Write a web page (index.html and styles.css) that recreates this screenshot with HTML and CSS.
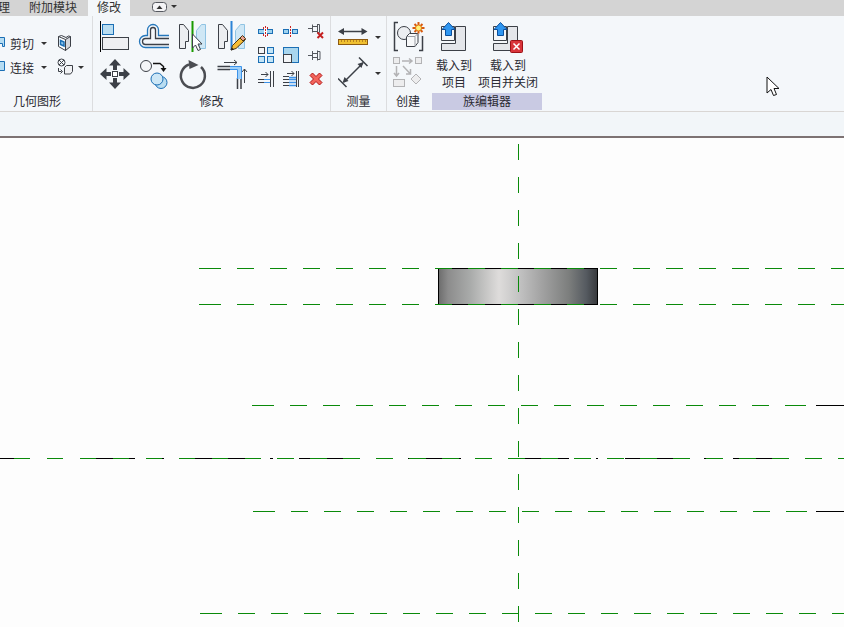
FILE: index.html
```html
<!DOCTYPE html>
<html lang="zh-CN">
<head>
    <meta charset="UTF-8">
    <meta name="viewport" content="width=device-width, initial-scale=1.0">
    <title>族编辑器</title>
    <link rel="stylesheet" href="styles.css">
</head>

<body>
    <nav class="tabs">
        <a href="#manage" class="tab">理</a>
        <a href="#addins" class="tab">附加模块</a>
        <a href="#modify" class="tab active">修改</a>
        <button class="collapse" aria-label="最小化功能区">
            <svg width="16" height="12"><rect x=".5" y="1.500" width="14" height="9" rx="3" fill="#f4f4f6" stroke="#55585f"/><path d="M4.500 8l3-3.500 3 3.500z" fill="#333"/></svg>
            <span class="caret"></span>
        </button>
    </nav>

    <div class="ribbon">
        <!-- 几何图形 -->
        <section class="group geometry">
            <div class="tools">
                <div class="row">
                    <button class="text-btn">
                        <svg width="5" height="16"><path d="M-1 2.500h5.500v9H2.500V8.500H-1z" fill="#b5dcf2" stroke="#1b6fb5"/></svg>
                        剪切 <span class="caret"></span>
                    </button>
                    <button aria-label="拆分面">
                        <svg width="16" height="18" fill="none" stroke="#3c4047"><path d="M1.500 2.500l7 3V16.500l-7-4z" fill="#fff"/><path d="M8.500 5.500l5-3v10l-5 4z" fill="#d4d7dc"/><path d="M1.500 2.500l3-1 4.500 2 2.500-1.500 2 .5"/><path d="M3.500 6.500l3.500 1.500v4l-3.500-1.500z" fill="#8cc6ee" stroke="#1b6fb5" stroke-width="1.500"/></svg>
                    </button>
                </div>
                <div class="row">
                    <button class="text-btn">
                        <svg width="5" height="16"><path d="M-1 2.500h5.500v9H-1z" fill="#b5dcf2" stroke="#1b6fb5"/></svg>
                        连接 <span class="caret"></span>
                    </button>
                    <button class="text-btn" aria-label="填色">
                        <svg width="16" height="18" fill="none" stroke="#3c4047"><circle cx="4.500" cy="4.500" r="3.500"/><path d="M2 2l5 5M7 2L2 7M1.500 10v3.500h3M3.500 11.500l2 2-2 2"/><path d="M7.500 9.500l2-2h6v6l-2 2.500h-6z" fill="#f1f2f4"/></svg>
                        <span class="caret"></span>
                    </button>
                </div>
            </div>
            <h2>几何图形</h2>
        </section>

        <!-- 修改 -->
        <section class="group modify">
            <div class="tools">
                <div class="big-grid">
                    <button aria-label="对齐">
                        <svg width="32" height="32"><path d="M1.500 0v31" stroke="#000"/><rect x="3.500" y="3.500" width="11" height="10" fill="#b9ddf1" stroke="#1b6fb5"/><rect x="3.500" y="16.500" width="26" height="12" fill="#eeeff2" stroke="#3c4047"/></svg>
                    </button>
                    <button aria-label="偏移">
                        <svg width="32" height="32" fill="none"><path d="M31 26.500H7.500a6 6 0 0 1 0-12H9.500V9a5.500 5.500 0 0 1 11 0v5.500H31" stroke="#2577bb" stroke-width="1.300"/><path d="M31 23.500H7.500a3 3 0 0 1 0-6H12.500V9a2.500 2.500 0 0 1 5 0v8.500H31" stroke="#3c4047" stroke-width="1.300"/></svg>
                    </button>
                    <button aria-label="镜像 - 拾取轴">
                        <svg width="32" height="32"><path d="M2.500 3.500h4l5 6v11h-3v7h-6z" fill="#eceef1" stroke="#3c4047"/><path d="M28.500 3.500h-4l-5 6v11h3v7h6z" fill="#cfe7f5" stroke="#8fc3e3"/><path d="M15.500 0v31" stroke="#1a9a00" stroke-width="2"/><path d="M15.500 13v14l3-3 2.500 5.500 2.500-1-2.500-5.500h4z" fill="#fff" stroke="#3c4047"/></svg>
                    </button>
                    <button aria-label="镜像 - 绘制轴">
                        <svg width="32" height="32"><path d="M2.500 3.500h4l5 6v11h-3v7h-6z" fill="#eceef1" stroke="#3c4047"/><path d="M28.500 3.500h-4l-5 6v11h3v7h6z" fill="#cfe7f5" stroke="#8fc3e3"/><path d="M15.500 0v29" stroke="#2b83d6" stroke-width="2"/><path d="M15 29l1.500-4.500L26 15l3.500 3.500-9.500 9z" fill="#f6bd35" stroke="#4a3413"/><path d="M24 17l2.500-2.500 3 3L27 20z" fill="#e8a08c" stroke="#4a3413"/><path d="M15 29.500l1-3 2 2z" fill="#222"/></svg>
                    </button>
                    <button aria-label="移动">
                        <svg width="32" height="32"><path d="M16 0l6 6.500h-4V11h-4V6.500h-4zM16 30l6-6.500h-4V19h-4v4.500h-4zM1 15l6.500-6v4H12v4H7.500v4zM31 15l-6.500-6v4H20v4h4.500v4z" fill="#3c4047"/><rect x="13.500" y="12.500" width="5" height="5" fill="#fff" stroke="#3c4047"/></svg>
                    </button>
                    <button aria-label="复制">
                        <svg width="32" height="32"><circle cx="8" cy="7" r="5.500" fill="#f4f5f7" stroke="#3c4047"/><path d="M15 4.500h7l3.500 3V10" fill="none" stroke="#111" stroke-width="1.500"/><path d="M22.500 9h6l-3 4z" fill="#111"/><circle cx="23" cy="23.500" r="6" fill="#b9ddf1" stroke="#1b6fb5"/><circle cx="19" cy="20" r="6" fill="#cde7f6" stroke="#1b6fb5"/></svg>
                    </button>
                    <button aria-label="旋转">
                        <svg width="32" height="32"><path d="M24 8a12 12 0 1 1-12-2.500" fill="none" stroke="#4b4d52" stroke-width="2.500"/><path d="M11.500 1l10 5-9 4z" fill="#4b4d52"/></svg>
                    </button>
                    <button aria-label="修剪/延伸为角">
                        <svg width="32" height="32" fill="none" stroke="#3c4047"><path d="M8 3.500h13M18 1l3 2.500L18 6M28.500 24V10M26 13l2.500-3 2.500 3"/><path d="M1.500 7.500H14M1.500 10.500H14M21.500 19v11M25 19v11" stroke-width="1.500"/><path d="M14 9h9.500v11" stroke="#9ed0fa" stroke-width="3"/><path d="M14 7.500h11.500V20M14 10.500h7.500V20" stroke="#3c93ea"/></svg>
                    </button>
                </div>
                <div class="small-grid">
                    <button aria-label="拆分图元">
                        <svg width="16" height="16"><rect x=".5" y="6.500" width="14" height="4" fill="#9fd3ef" stroke="#1b6fb5"/><path d="M6 6h3v5H6z" fill="#fff"/><path d="M7.500 3v12" stroke="#c22" stroke-dasharray="2 1"/><path d="M5.500 4v2M9.500 4v2M5.500 11v2M9.500 11v2" stroke="#c22"/></svg>
                    </button>
                    <button aria-label="用间隙拆分">
                        <svg width="16" height="16"><rect x=".5" y="6.500" width="5" height="4" fill="#9fd3ef" stroke="#1b6fb5"/><rect x="9.500" y="6.500" width="5" height="4" fill="#9fd3ef" stroke="#1b6fb5"/><path d="M7.500 3v12" stroke="#c22" stroke-dasharray="2 1"/></svg>
                    </button>
                    <button aria-label="解锁">
                        <svg width="16" height="16"><path d="M0 5.500h4.500M4.500 1.500v8M4.500 3.500h5M4.500 8.500h5M9.500 1v9M9.500 1.500h2v8h-2" fill="none" stroke="#55595f"/><path d="M9.500 9.500l5.500 5.500M15 9.500L9.500 15" stroke="#c42020" stroke-width="2"/></svg>
                    </button>
                    <button aria-label="阵列">
                        <svg width="16" height="16" fill="#c4e5f6" stroke="#1b6fb5"><rect x=".5" y=".5" width="6" height="6" fill="#f4f5f7" stroke="#3c4047"/><rect x="9.500" y=".5" width="6" height="6"/><rect x=".5" y="9.500" width="6" height="6"/><rect x="9.500" y="9.500" width="6" height="6"/></svg>
                    </button>
                    <button aria-label="缩放">
                        <svg width="16" height="16"><rect x=".5" y=".5" width="15" height="15" fill="#a9d6ee" stroke="#1b6fb5"/><rect x=".5" y="7.500" width="8" height="8" fill="#f4f5f7" stroke="#3c4047"/></svg>
                    </button>
                    <button aria-label="锁定">
                        <svg width="16" height="16"><path d="M0 8.500h4.500M4.500 4v9M4.500 6.500h5M4.500 10.500h5M9.500 3.500v10M9.500 4.500h2.500v8H9.500" fill="none" stroke="#55595f"/></svg>
                    </button>
                    <button aria-label="修剪/延伸单个图元">
                        <svg width="16" height="16" fill="none" stroke="#3c4047"><path d="M3 3.500h7M7.500 1l2.500 2.500L7.500 6M0 8.500h6M0 11.500h6"/><path d="M6 8.500h6M6 11.500h6" stroke="#3c93ea"/><path d="M12.500 0v16M15.500 0v16"/></svg>
                    </button>
                    <button aria-label="修剪/延伸多个图元">
                        <svg width="16" height="16" fill="none" stroke="#3c4047"><path d="M4 2.500h7M8.500 0L11 2.500 8.500 5M0 5.500h6M0 8.500h6M0 11.500h6M0 14.500h6"/><path d="M6 6.500h7M6 8.500h7M6 11.500h7M6 14.500h7" stroke="#3c93ea" stroke-width="1.500"/><path d="M13.500 0v16M15.500 0v16"/></svg>
                    </button>
                    <button aria-label="删除">
                        <svg width="16" height="16"><path d="M2 4.500L4.500 2 8 5.500 11.500 2 14 4.500 10.500 8l3.500 3.500-2.500 2.500L8 10.500 4.500 14 2 11.500 5.500 8z" fill="#f2655c" stroke="#b31313"/></svg>
                    </button>
                </div>
            </div>
            <h2>修改</h2>
        </section>

        <!-- 测量 -->
        <section class="group measure">
            <div class="tools">
                <button class="text-btn" aria-label="测量">
                    <svg width="32" height="32"><path d="M4 10.500h22" stroke="#3c4047" stroke-width="1.500"/><path d="M0 10.500L6 7v7zM29.500 10.500l-6-3.500v7z" fill="#3c4047"/><rect x=".5" y="18.500" width="29" height="5" fill="#f0c030" stroke="#8d5a10"/><path d="M3.500 19v2M6.500 19v2M9.500 19v2M12.500 19v2M15.500 19v2M18.500 19v2M21.500 19v2M24.500 19v2M27.500 19v2" stroke="#b98320"/></svg>
                    <span class="caret"></span>
                </button>
                <button class="text-btn" aria-label="尺寸标注">
                    <svg width="32" height="32" stroke="#3c4047"><path d="M6 25L25 6M0 21.500l8.500 8.500M21 .5L29.500 9" stroke-width="1.500"/><path d="M4.500 26l2-6 4 4zM25.500 5l-2 6-4-4z" fill="#3c4047" stroke="none"/></svg>
                    <span class="caret"></span>
                </button>
            </div>
            <h2>测量</h2>
        </section>

        <!-- 创建 -->
        <section class="group create">
            <div class="tools">
                <button aria-label="创建组">
                    <svg width="32" height="32" fill="none" stroke="#3c4047"><path d="M5 1.500H1.500v28H5M26 29.500h3.500V15" stroke-width="1.500"/><circle cx="11" cy="12" r="6.500" fill="#eceef1"/><path d="M13.500 15.500l3-3H25v9l-3 4h-8.500z" fill="#f7f8f9"/><path d="M13.500 15.500H22v10M22 15.500l3-3" stroke="#9a9da3"/><path d="M25.500 1v11.500M19.500 7h12M21.500 3l8 8M29.500 3l-8 8" stroke="#d85a10" stroke-width="2"/><circle cx="25.500" cy="7" r="3" fill="#fff27a" stroke="#e07a10"/></svg>
                </button>
                <button aria-label="创建类似" disabled>
                    <svg width="32" height="32" fill="#ededee" stroke="#b3b3b5"><rect x=".5" y=".5" width="6" height="6"/><rect x="22.500" y=".5" width="6" height="6"/><rect x=".5" y="22.500" width="11" height="7"/><path d="M23 17l5 5-5 5-5-5z"/><path d="M9 4h10M16 1.500L19 4l-3 2.500M3.500 9v10M1 16l2.500 3L6 16M10 9l7.500 8M17.500 12v5H13" fill="none" stroke-width="1.500"/></svg>
                </button>
            </div>
            <h2>创建</h2>
        </section>

        <!-- 族编辑器 -->
        <section class="group family">
            <div class="tools">
                <button class="load">
                    <svg width="28" height="32"><path d="M1.500 5.500h13v14h-13z" fill="#f5f6f7" stroke="#3c4047"/><path d="M15.500 5.500h10v24h-24v-7h14z" fill="#e4e6ea" stroke="#3c4047"/><path d="M8.500 1.500L15 8.500h-3.500v6h-6v-6H2z" fill="#2f96f0" stroke="#0c4f9c"/></svg>
                    <span>载入到<br>项目</span>
                </button>
                <button class="load">
                    <svg width="32" height="32"><path d="M1.500 5.500h13v14h-13z" fill="#f5f6f7" stroke="#3c4047"/><path d="M15.500 5.500h10v24h-24v-7h14z" fill="#e4e6ea" stroke="#3c4047"/><path d="M8.500 1.500L15 8.500h-3.500v6h-6v-6H2z" fill="#2f96f0" stroke="#0c4f9c"/><rect x="18.500" y="19.500" width="12" height="12" rx="1" fill="#d9343a" stroke="#9c1216"/><path d="M21.500 22.500l6 6M27.500 22.500l-6 6" stroke="#fff" stroke-width="1.500"/></svg>
                    <span>载入到<br>项目并关闭</span>
                </button>
            </div>
            <h2>族编辑器</h2>
        </section>
    </div>

    <div class="options"></div>

    <main class="view">
        <svg class="drawing" role="img" aria-label="立面视图">
            <defs>
                <linearGradient id="metal">
                    <stop offset="0" stop-color="#6c6c6c"/>
                    <stop offset=".06" stop-color="#8c8c8c"/>
                    <stop offset=".2" stop-color="#a9abaa"/>
                    <stop offset=".38" stop-color="#dedcdb"/>
                    <stop offset=".5" stop-color="#c4c4c4"/>
                    <stop offset=".65" stop-color="#a2a2a2"/>
                    <stop offset=".82" stop-color="#7c7e7d"/>
                    <stop offset=".93" stop-color="#555a60"/>
                    <stop offset="1" stop-color="#37393c"/>
                </linearGradient>
            </defs>
            <rect x="438.500" y="130.500" width="159" height="36" fill="url(#metal)" stroke="#000"/>

            <!-- 模型线 -->
            <path class="model" d="M0 320.500h14M96 320.500h39M162 320.500h2M195 320.500h66M270 320.500h3M299 320.500h61M408 320.500h53M525 320.500h44M596 320.500h2M625 320.500h65M704 320.500h2M733 320.500h56M816 267.500h28M816 373.500h28"/>

            <!-- 参照平面 -->
            <g class="plane">
                <path d="M199 130.500h22M199 166.500h22M252 267.500h22M253 373.500h22M200 475.500h22M785 267.500h21M786 373.500h21" stroke-dasharray="none"/>
                <path d="M237 130.500H3000"/>
                <path d="M237 166.500H3000"/>
                <path d="M290 267.500H780"/>
                <path d="M291 373.500H780"/>
                <path d="M238 475.500H3000"/>
                <path d="M14 320.500H262" stroke-dasharray="16 17"/>
                <path d="M277 320.500H3000"/>
                <path d="M518.500 6V484" stroke-dasharray="16 17"/>
            </g>
        </svg>
    </main>

    <svg class="cursor" width="14" height="21"><path d="M1 1v16l4-3.500 2.500 6 3-1L8 12.500h5z" fill="#fff" stroke="#111"/></svg>
</body>
</html>
```
FILE: styles.css
```css
* {
    box-sizing: border-box;
}
html, body {
    height: 100%;
    margin: 0;
}
body {
    display: flex;
    flex-direction: column;
    overflow: hidden;
    font: 12px/17px "Noto Sans CJK SC", sans-serif;
    color: #2b2b33;
    background: #fdfdfd;
}
button {
    display: flex;
    padding: 0;
    border: 0;
    font: inherit;
    color: inherit;
    background: none;
}
svg {
    display: block;
    flex: none;
}

/* 选项卡 */
.tabs {
    display: flex;
    height: 16px;
    margin-left: -11px;
    background: #d4d4d4;
}
.tab {
    padding: 0 9px;
    line-height: 13px;
    color: #333;
    text-decoration: none;
}
.tab + .tab {
    padding: 0 11px 0 10px;
}
.tab + .tab.active {
    padding: 0 9px;
    background: #f4f7fa;
}
.collapse {
    align-items: center;
    gap: 3px;
    height: 13px;
    margin-left: 22px;
}
.caret {
    border: 3px solid transparent;
    border-top-color: #333;
    border-bottom: 0;
}

/* 功能区 */
.ribbon {
    display: flex;
    border-bottom: 1px solid #d9d6d4;
    background: #f4f7fa;
}
.group {
    display: flex;
    flex-direction: column;
    padding-bottom: 1px;
    border-right: 1px solid #dcdddf;
}
.group h2 {
    margin: 0;
    padding-bottom: 2px;
    font-size: 12px;
    font-weight: normal;
    line-height: 15px;
    text-align: center;
}
.tools {
    height: 77px;
    padding-top: 5px;
}
.text-btn {
    align-items: center;
}

.geometry {
    width: 93px;
}
.geometry .tools {
    padding-top: 15px;
}
.geometry h2 {
    padding-right: 18px;
}
.row {
    display: flex;
    align-items: center;
    gap: 10px;
    height: 24px;
}
.row .text-btn {
    gap: 5px;
}
.row .text-btn:first-child .caret {
    margin-left: 2px;
}

.modify .tools {
    display: flex;
    gap: 10px;
    padding: 5px 6px 0;
}
.big-grid {
    display: grid;
    grid-template-columns: repeat(4, 32px);
    gap: 4px 7px;
}
.small-grid {
    display: grid;
    grid-template-columns: repeat(3, 16px);
    gap: 8px 9px;
    align-content: start;
    padding-top: 2px;
}

.measure .tools,
.create .tools {
    display: flex;
    flex-direction: column;
    gap: 4px;
    padding: 5px 5px 0 7px;
}
.measure .text-btn {
    gap: 5px;
}

.create {
    border-right: 0;
}
.create .tools {
    padding: 5px 4px 0 6px;
}
.family {
    margin-left: 3px;
    border-right: 0;
}
.family .tools {
    display: flex;
    gap: 6px;
    padding: 5px 4px 0;
}
.family h2 {
    background: #c9cae3;
}
.load {
    flex-direction: column;
    align-items: center;
    gap: 3px;
    line-height: 17px;
}

.options {
    height: 26px;
    border-bottom: 2px solid #7d7273;
    background: #f2f6f9;
}

/* 绘图区 */
.view {
    flex: 1;
    min-height: 0;
}
.drawing {
    width: 100%;
    height: 100%;
}
.model {
    stroke: #000;
}
.plane {
    fill: none;
    stroke: #0a8a0a;
    stroke-dasharray: 17 16;
}
.cursor {
    position: absolute;
    top: 76px;
    left: 766px;
}
```
